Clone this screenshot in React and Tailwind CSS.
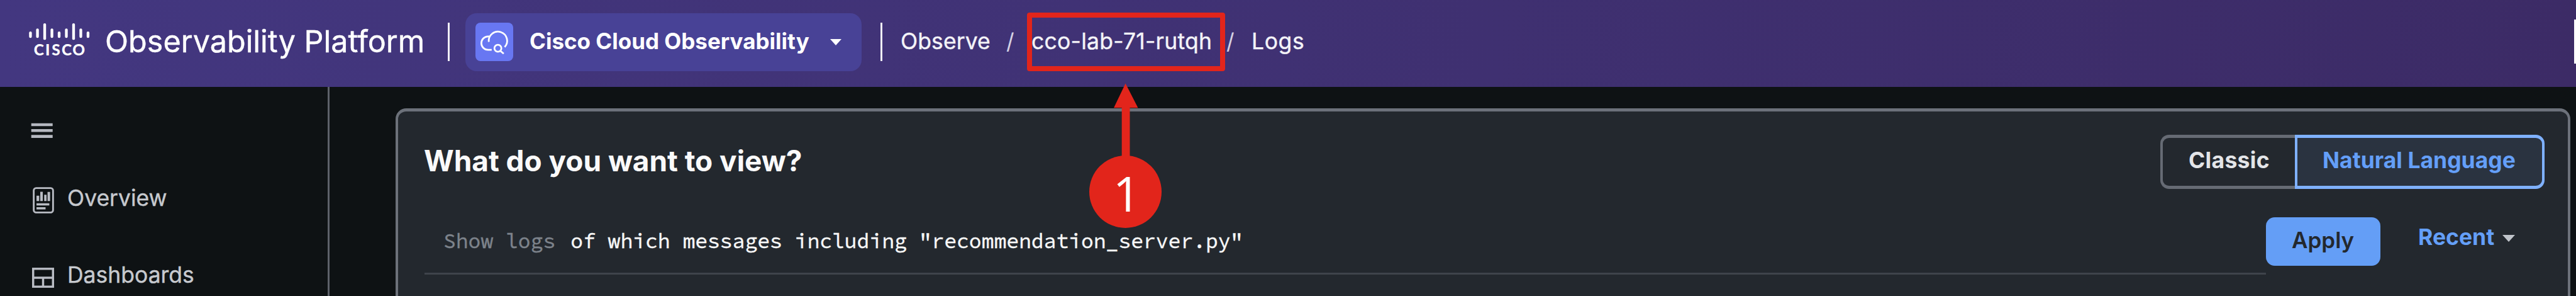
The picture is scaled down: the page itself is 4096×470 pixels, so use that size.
import React from "react";

const inter = "font-['Inter','Liberation_Sans',sans-serif] whitespace-nowrap";
const regular = "[-webkit-text-stroke:0.4px_currentColor]";

const bars = [
  [66, 100, 133],
  [102, 85, 133],
  [139, 58, 143],
  [176, 85, 133],
  [213, 100, 133],
  [250, 85, 133],
  [287, 58, 143],
  [324, 85, 133],
  [361, 100, 133],
];

function CiscoLogo() {
  return (
    <svg className="mt-[-7px] ml-[45px] h-[54px] w-[99px] shrink-0" viewBox="55 55 319 174">
      {bars.map(([x, top, bottom]) => (
        <line key={x} x1={x} x2={x} y1={top + 7} y2={bottom - 7} stroke="#fff" strokeWidth="14" strokeLinecap="round" />
      ))}
      <text x="83 142 175 226 281" y="222" fill="#fff" fontFamily="Lato, sans-serif" fontWeight="900" fontSize="79">
        CISCO
      </text>
    </svg>
  );
}

function CloudIcon() {
  return (
    <svg className="h-full w-full" viewBox="95 58 195 194" fill="none" stroke="#fff" strokeWidth="9">
      <path d="M179 196H160A34.500 34.500 0 0 1 160 127H168" />
      <path d="M164 155A47.500 47.500 0 1 1 246 182" />
      <circle cx="211" cy="188" r="18" />
      <path d="M223 201L241 216" />
    </svg>
  );
}

function Caret({ className }) {
  return (
    <svg className={className} viewBox="0 0 20 10" preserveAspectRatio="none">
      <path d="M0 0H20L10 10Z" fill="currentColor" />
    </svg>
  );
}

function Slash() {
  return <span className={`${inter} w-[40px] shrink-0 pb-[2px] text-[35px] leading-none text-[#d6d2e4]`}>/</span>;
}

function Header() {
  return (
    <header className="flex h-[138px] shrink-0 items-center bg-linear-to-r from-[#433780] to-[#3c2b66] pb-[5px] text-white">
      <CiscoLogo />
      <div className={`${inter} ${regular} ml-[23px] w-[545px] shrink-0 pb-[1px] text-[48.5px] leading-none`}>Observability Platform</div>
      <div className="h-[61px] w-[3px] shrink-0 bg-[#efeef5]" />
      <div className="ml-[25px] flex h-[92px] w-[630px] shrink-0 items-center rounded-[18px] bg-[#484296] pl-[16px]">
        <div className="h-[61px] w-[60px] shrink-0 overflow-hidden rounded-[8px] bg-[#6877f2]">
          <CloudIcon />
        </div>
        <div className={`${inter} ml-[26px] w-[478px] shrink-0 pb-[2px] text-[35px] leading-none font-bold`}>Cisco Cloud Observability</div>
        <Caret className="h-[10px] w-[18px]" />
      </div>
      <div className="ml-[30px] h-[61px] w-[3px] shrink-0 bg-[#efeef5]" />
      <nav className="flex items-center text-[#f4f3f8]">
        <span className={`${inter} ${regular} ml-[29px] w-[168px] pb-[1px] text-[35.5px] leading-none tracking-[0.1px]`}>Observe</span>
        <Slash />
        <span className={`${inter} ${regular} w-[310px] pb-[1px] text-[35.5px] leading-none tracking-[0.25px]`}>cco-lab-71-rutqh</span>
        <Slash />
        <span className={`${inter} ${regular} pb-[1px] text-[35.5px] leading-none tracking-[0.6px]`}>Logs</span>
      </nav>
      <div className="mt-[-2px] ml-auto h-[70px] w-[3px] bg-white" />
    </header>
  );
}

function Sidebar() {
  return (
    <aside className="w-[524px] shrink-0 border-r-[3px] border-[#5d6169] text-[#c6c9ce]">
      <svg className="mt-[57px] ml-[49px] block h-[25px] w-[35px]" viewBox="0 0 35 25" stroke="#b5b8c0" strokeWidth="4.6">
        <path d="M0.7 3H34.7M0.7 12.3H34.7M0.7 21.6H34.7" />
      </svg>
      <div className="mt-[76px] ml-[52px] flex h-[43px] items-center">
        <svg className="h-[42px] w-[34px]" viewBox="78 387 108 134" fill="#b9bcc4">
          <rect x="83" y="392" width="98" height="124" rx="12" fill="none" stroke="#b9bcc4" strokeWidth="9" />
          <path d="M97 431H111V458H97ZM116 411H129V458H116ZM136 426H148V458H136ZM153 412H166V458H153ZM97 469H162V480H97ZM97 489H143V500H97Z" />
        </svg>
        <span className={`${inter} ${regular} ml-[21px] pb-[6px] text-[35.5px] leading-none`}>Overview</span>
      </div>
      <div className="mt-[80px] ml-[51px] flex h-[43px] items-center">
        <svg className="h-[32px] w-[35px]" viewBox="75 797 112 102" fill="none" stroke="#b9bcc4" strokeWidth="11">
          <rect x="80.5" y="802.5" width="101" height="91" />
          <path d="M80 848H182M131 848V894" />
        </svg>
        <span className={`${inter} ${regular} ml-[21px] pb-[8px] text-[35.5px] leading-none`}>Dashboards</span>
      </div>
    </aside>
  );
}

function QueryPanel() {
  return (
    <section className="mt-[34px] mr-[9px] ml-[105px] flex flex-1 flex-col rounded-t-[17px] border-x-[4px] border-t-[5px] border-[#6c717a] bg-[#23282e] pr-[37px] pl-[42px]">
      <div className="mt-[37px] flex h-[86px] items-center">
        <h1 className={`${inter} -ml-[1px] pb-[4px] text-[46px] leading-none font-bold tracking-[-0.05px] text-[#fafafa]`}>What do you want to view?</h1>
        <div className="ml-auto flex h-[86px]">
          <div className="flex w-[214px] items-center rounded-l-[14px] border-y-[5px] border-l-[4px] border-[#666b74] pb-[5px] pl-[41px]">
            <span className={`${inter} text-[35.5px] leading-none font-bold tracking-[0.3px] text-[#e3e5e8]`}>Classic</span>
          </div>
          <div className="flex w-[397px] items-center rounded-r-[14px] border-x-[4px] border-y-[5px] border-[#7fb1ff] bg-[#2a3340] pb-[5px] pl-[40px]">
            <span className={`${inter} text-[35.5px] leading-none font-bold text-[#649ff8]`}>Natural Language</span>
          </div>
        </div>
      </div>
      <div className="mt-[45px] flex">
        <div className="h-[91px] w-[2928px] shrink-0 border-b-[3px] border-[#3f444b]">
          <div className="flex h-[75px] items-center gap-[24px] pl-[30px] font-['Source_Code_Pro','Liberation_Mono',monospace] text-[33px] leading-none whitespace-pre">
            <span className={`${regular} text-[#7d838b]`}>Show logs</span>
            <span className={`${regular} text-[#f8f8f8]`}>of which messages including "recommendation_server.py"</span>
          </div>
        </div>
        <div className="flex h-[77px] w-[182px] shrink-0 items-center rounded-[14px] bg-[#649ef6] pb-[4px] pl-[41px]">
          <span className={`${inter} text-[35px] leading-none font-semibold text-[#23282e]`}>Apply</span>
        </div>
        <div className="ml-[60px] flex h-[63px] items-center text-[#649ff8]">
          <span className={`${inter} w-[134px] text-[35.5px] leading-none font-bold`}>Recent</span>
          <Caret className="mt-[4px] h-[11px] w-[20px] text-[#c0c4ca]" />
        </div>
      </div>
    </section>
  );
}

function Callout() {
  return (
    <>
      <div className="absolute top-[20px] left-[1633px] h-[93px] w-[315px] rounded-[4px] border-[8.4px] border-[#e2251b]" />
      <svg className="absolute top-[132px] left-[1770px] h-[120px] w-[40px]" viewBox="0 0 40 120" fill="#e2251b">
        <path d="M19.6 0.5L39.5 39.3H26.5V120H13.7V39.3H1Z" />
      </svg>
      <div className="absolute top-[247px] left-[1732px] flex h-[115px] w-[115px] justify-center rounded-full bg-[#e2251b] pt-[22px] pl-[4px] font-['Open_Sans','Noto_Sans',sans-serif] text-[76px] leading-[76px] text-white">1</div>
    </>
  );
}

export default function App() {
  return (
    <div className="relative flex h-[470px] w-[4096px] flex-col overflow-hidden bg-[#0e1214]">
      <Header />
      <div className="flex flex-1">
        <Sidebar />
        <QueryPanel />
      </div>
      <Callout />
    </div>
  );
}
